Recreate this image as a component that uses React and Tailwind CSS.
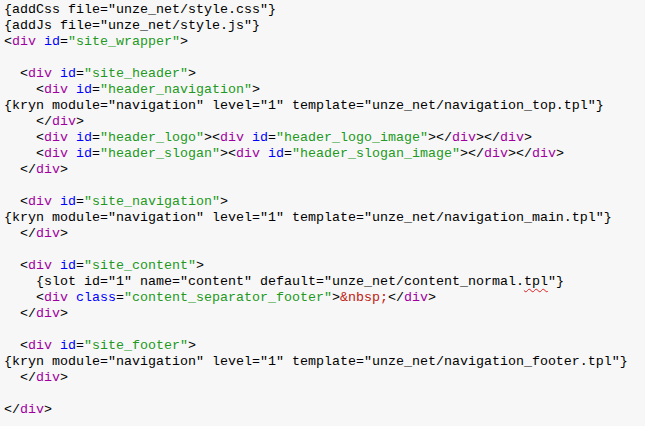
const lines = [
  '{addCss file="unze_net/style.css"}',
  '{addJs file="unze_net/style.js"}',
  '<div id="site_wrapper">',
  '',
  '  <div id="site_header">',
  '    <div id="header_navigation">',
  '{kryn module="navigation" level="1" template="unze_net/navigation_top.tpl"}',
  '    </div>',
  '    <div id="header_logo"><div id="header_logo_image"></div></div>',
  '    <div id="header_slogan"><div id="header_slogan_image"></div></div>',
  '  </div>',
  '',
  '  <div id="site_navigation">',
  '{kryn module="navigation" level="1" template="unze_net/navigation_main.tpl"}',
  '  </div>',
  '',
  '  <div id="site_content">',
  '    {slot id="1" name="content" default="unze_net/content_normal.tpl"}',
  '    <div class="content_separator_footer">&nbsp;</div>',
  '  </div>',
  '',
  '  <div id="site_footer">',
  '{kryn module="navigation" level="1" template="unze_net/navigation_footer.tpl"}',
  '  </div>',
  '',
  '</div>',
];

// tiny html highlighter, template tags {..} stay plain
function highlight(line) {
  if (line.trim().startsWith('{')) {
    const i = line.indexOf('.tpl"}');
    if (line.includes('content_normal')) {
      return [
        line.slice(0, i + 1),
        <span key="sp" className="underline decoration-wavy decoration-[#e02020] decoration-1 underline-offset-[3px]">tpl</span>,
        line.slice(i + 4),
      ];
    }
    return line;
  }
  const re = /(<\/?)(\w+)|(\w+)(=)("[^"]*")|(&\w+;)/g;
  const out = [];
  let last = 0;
  let m;
  let k = 0;
  while ((m = re.exec(line))) {
    if (m.index > last) out.push(line.slice(last, m.index));
    if (m[1]) {
      out.push(m[1]);
      out.push(<span key={k++} className="text-[#a000a0]">{m[2]}</span>);
    } else if (m[3]) {
      out.push(<span key={k++} className="text-[#0000ff]">{m[3]}</span>);
      out.push(m[4]);
      out.push(<span key={k++} className="text-[#229922]">{m[5]}</span>);
    } else {
      out.push(<span key={k++} className="text-[#c02010]">{m[6]}</span>);
    }
    last = re.lastIndex;
  }
  if (last < line.length) out.push(line.slice(last));
  return out;
}

export default function App() {
  return (
    <div className="w-[645px] h-[426px] bg-[#f7f7f7] overflow-hidden pt-[2px] pl-[4px]">
      <pre className="font-['Courier_New','Liberation_Mono',monospace] text-[13.33px] leading-[16px] text-black whitespace-pre">
        {lines.map((l, i) => (
          <div key={i} className="h-4">{highlight(l)}</div>
        ))}
      </pre>
    </div>
  );
}
